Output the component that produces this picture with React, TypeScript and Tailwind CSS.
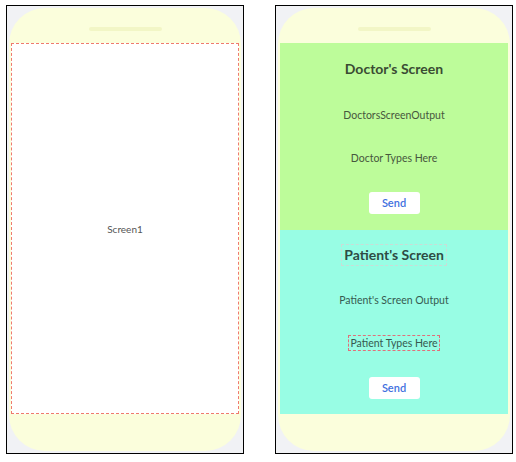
import React from 'react';

const font = { fontFamily: 'Lato, "Open Sans", sans-serif' };

const Phone: React.FC<{ children: React.ReactNode }> = ({ children }) => (
  <div className="w-[238px] h-[449px] border border-black bg-[#f1f2f5] p-[2px] shrink-0">
    <div className="h-full rounded-[36px] bg-[#fbfedc] flex flex-col">
      <div className="h-[35px] flex justify-center pt-[19px]">
        <div className="w-[73px] h-[4px] rounded-full bg-[#f2f6c6]" />
      </div>
      <div className="mx-[2px] h-[371px] flex flex-col">{children}</div>
    </div>
  </div>
);

const SendButton = () => (
  <button className="w-[51px] h-[22px] bg-white rounded-[3px] text-[11px] font-semibold text-[#4170de]">
    Send
  </button>
);

const App: React.FC = () => {
  return (
    <div className="w-[516px] h-[462px] bg-white flex gap-[31px] pl-[6px] pt-[5px]" style={font}>
      {/* Designer view */}
      <Phone>
        <div className="flex-1 bg-white border border-dashed border-[#ef7a6e] flex items-center justify-center">
          <span className="text-[10px] text-[#555] mt-[1px]">Screen1</span>
        </div>
      </Phone>

      {/* Live preview */}
      <Phone>
        <div className="h-[187px] bg-[#bdfc9a] flex flex-col items-center pt-[16px] text-[#47573d]">
          <h2 className="h-5 leading-5 text-[14px] font-bold text-[#3a4c33]">Doctor's Screen</h2>
          <p className="mt-[29px] h-[14px] leading-[14px] text-[10.5px]">DoctorsScreenOutput</p>
          <p className="mt-[29px] h-[14px] leading-[14px] text-[10.5px]">Doctor Types Here</p>
          <div className="mt-[24px]">
            <SendButton />
          </div>
        </div>
        <div className="h-[184px] bg-[#98fde4] flex flex-col items-center pt-[14px] text-[#365a50]">
          <h2 className="h-[22px] leading-5 px-[2px] text-[14px] font-bold text-[#2e4c44] border border-dashed border-[#c9dcd6]">
            Patient's Screen
          </h2>
          <p className="mt-[27px] h-[14px] leading-[14px] text-[10.5px]">Patient's Screen Output</p>
          <p className="mt-[28px] h-[16px] leading-[14px] text-[10.5px] px-[1px] border border-dashed border-[#e0707a]">
            Patient Types Here
          </p>
          <div className="mt-[23px]">
            <SendButton />
          </div>
        </div>
      </Phone>
    </div>
  );
};

export default App;
